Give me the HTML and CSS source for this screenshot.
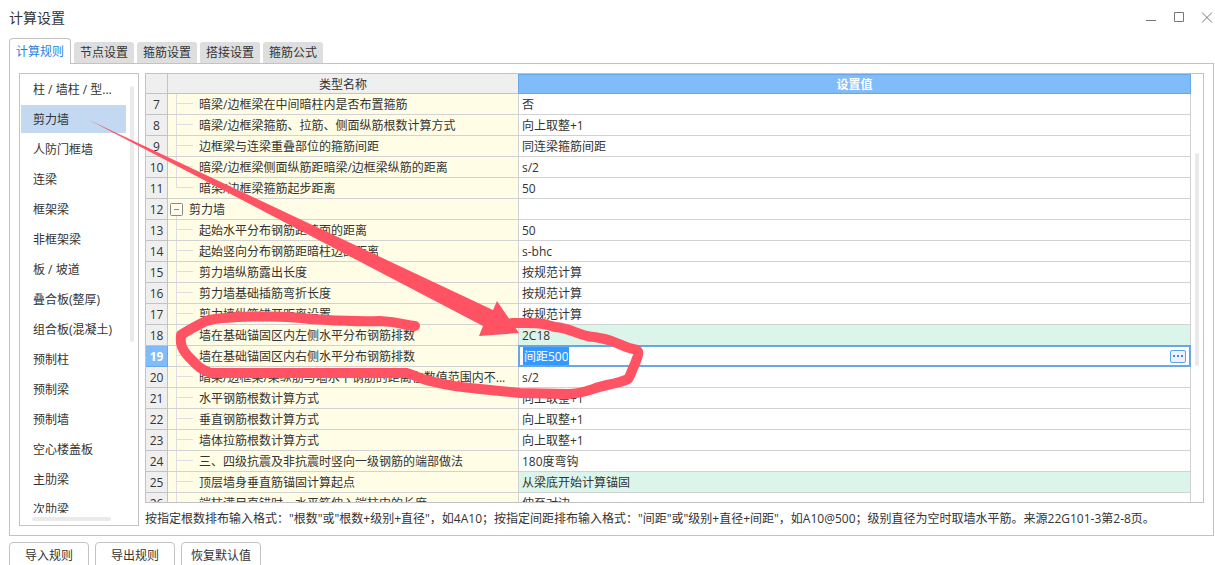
FILE: index.html
```
<!DOCTYPE html>
<html lang="zh-CN">
<head>
<meta charset="utf-8">
<title>计算设置</title>
<link rel="stylesheet" href="styles.css">
</head>
<body>
<main class="window">
  <header class="titlebar">
    <h1 class="title">计算设置</h1>
    <div class="window-controls">
      <button class="window-button" aria-label="最小化"><svg width="12" height="12" viewBox="0 0 12 12"><path d="M1 8.500h10"/></svg></button>
      <button class="window-button" aria-label="最大化"><svg width="12" height="12" viewBox="0 0 12 12"><path d="M1.500 0.500h9v9h-9z"/></svg></button>
      <button class="window-button" aria-label="关闭"><svg width="12" height="12" viewBox="0 0 12 12"><path d="M1 0.500l10 10M11 0.500l-10 10"/></svg></button>
    </div>
  </header>

  <nav class="tabs">
    <button class="tab tab-active">计算规则</button>
    <button class="tab">节点设置</button>
    <button class="tab">箍筋设置</button>
    <button class="tab">搭接设置</button>
    <button class="tab">箍筋公式</button>
  </nav>

  <section class="panel">
    <aside class="sidebar">
      <div class="sidebar-body">
        <div class="categories">
          <button class="category">柱 / 墙柱 / 型...</button>
          <button class="category category-active">剪力墙</button>
          <button class="category">人防门框墙</button>
          <button class="category">连梁</button>
          <button class="category">框架梁</button>
          <button class="category">非框架梁</button>
          <button class="category">板 / 坡道</button>
          <button class="category">叠合板(整厚)</button>
          <button class="category">组合板(混凝土)</button>
          <button class="category">预制柱</button>
          <button class="category">预制梁</button>
          <button class="category">预制墙</button>
          <button class="category">空心楼盖板</button>
          <button class="category">主肋梁</button>
          <button class="category">次肋梁</button>
        </div>
        <div class="sidebar-track"><div class="thumb sidebar-thumb"></div></div>
      </div>
      <div class="thumb bottom-thumb"></div>
    </aside>

    <div class="content">
      <div class="grid">
        <table class="rules">
          <colgroup><col class="col-number"><col class="col-name"><col></colgroup>
          <thead>
            <tr><th></th><th class="head-name">类型名称</th><th class="head-value">设置值</th></tr>
          </thead>
          <tbody>
            <tr><th>7</th><td class="name"><div class="leaf">暗梁/边框梁在中间暗柱内是否布置箍筋</div></td><td>否</td></tr>
            <tr><th>8</th><td class="name"><div class="leaf">暗梁/边框梁箍筋、拉筋、侧面纵筋根数计算方式</div></td><td>向上取整+1</td></tr>
            <tr><th>9</th><td class="name"><div class="leaf">边框梁与连梁重叠部位的箍筋间距</div></td><td>同连梁箍筋间距</td></tr>
            <tr><th>10</th><td class="name"><div class="leaf">暗梁/边框梁侧面纵筋距暗梁/边框梁纵筋的距离</div></td><td>s/2</td></tr>
            <tr><th>11</th><td class="name"><div class="leaf leaf-last">暗梁/边框梁箍筋起步距离</div></td><td>50</td></tr>
            <tr><th>12</th><td class="name"><div class="group"><button class="toggle" aria-label="折叠"><svg width="13" height="13" viewBox="0 0 13 13"><rect x="0.500" y="0.500" width="12" height="12" rx="1"/><path d="M4 6.500h5"/></svg></button><span class="group-name">剪力墙</span></div></td><td></td></tr>
            <tr><th>13</th><td class="name"><div class="leaf">起始水平分布钢筋距墙面的距离</div></td><td>50</td></tr>
            <tr><th>14</th><td class="name"><div class="leaf">起始竖向分布钢筋距暗柱边的距离</div></td><td>s-bhc</td></tr>
            <tr><th>15</th><td class="name"><div class="leaf">剪力墙纵筋露出长度</div></td><td>按规范计算</td></tr>
            <tr><th>16</th><td class="name"><div class="leaf">剪力墙基础插筋弯折长度</div></td><td>按规范计算</td></tr>
            <tr><th>17</th><td class="name"><div class="leaf">剪力墙纵筋错开距离设置</div></td><td>按规范计算</td></tr>
            <tr><th>18</th><td class="name"><div class="leaf">墙在基础锚固区内左侧水平分布钢筋排数</div></td><td class="changed">2C18</td></tr>
            <tr><th class="number-active">19</th><td class="name"><div class="leaf">墙在基础锚固区内右侧水平分布钢筋排数</div></td><td class="editing"><div class="editor"><input class="editor-input" aria-label="设置值" value="间距500" size="4"><button class="more" aria-label="更多"><svg width="16" height="13" viewBox="0 0 16 13"><rect x="0.500" y="0.500" width="15" height="12" rx="1.500"/><path d="M3 5h2v2H3zM7 5h2v2H7zM11 5h2v2h-2z"/></svg></button></div></td></tr>
            <tr><th>20</th><td class="name"><div class="leaf">暗梁/边框梁/梁纵筋与墙水平钢筋的距离在数值范围内不...</div></td><td>s/2</td></tr>
            <tr><th>21</th><td class="name"><div class="leaf">水平钢筋根数计算方式</div></td><td>向上取整+1</td></tr>
            <tr><th>22</th><td class="name"><div class="leaf">垂直钢筋根数计算方式</div></td><td>向上取整+1</td></tr>
            <tr><th>23</th><td class="name"><div class="leaf">墙体拉筋根数计算方式</div></td><td>向上取整+1</td></tr>
            <tr><th>24</th><td class="name"><div class="leaf">三、四级抗震及非抗震时竖向一级钢筋的端部做法</div></td><td>180度弯钩</td></tr>
            <tr><th>25</th><td class="name"><div class="leaf">顶层墙身垂直筋锚固计算起点</div></td><td class="changed">从梁底开始计算锚固</td></tr>
            <tr><th>26</th><td class="name"><div class="leaf">端柱满足直锚时，水平筋伸入端柱内的长度</div></td><td>伸至对边</td></tr>
          </tbody>
        </table>
        <div class="grid-track"><div class="thumb grid-thumb"></div></div>
      </div>
      <p class="hint">按指定根数排布输入格式："根数"或"根数+级别+直径"，如4A10；按指定间距排布输入格式："间距"或"级别+直径+间距"，如A10@500；级别直径为空时取墙水平筋。来源22G101-3第2-8页。</p>
    </div>
  </section>

  <footer class="actions">
    <button class="action">导入规则</button>
    <button class="action">导出规则</button>
    <button class="action">恢复默认值</button>
  </footer>

  <svg class="markup" width="660" height="420" viewBox="0 0 660 420" aria-hidden="true">
    <path class="markup-arrow" d="M89 120L493 310L497 301L519 333L479 336L483 326Z"/>
    <path class="markup-loop" d="M415 326C405 325 400 322 380 321C350 322 330 320 310 319C285 316 250 316 238 317C222 318 214 318 206 321C196 326 190 329 181 335C180 345 182 349 188 356C195 363 200 370 211 373L407 373C415 375 420 379 430 381C450 386 460 387 480 389L520 393L567 394C585 394 592 388 607 385C617 383 624 381 628 379C631 375 631 372 634 366C637 358 640 353 637 350C632 349 625 347 619 344C606 338 600 338 587 336C575 333 569 328 555 327C540 322 530 323 512 323"/>
  </svg>
</main>
</body>
</html>
```
FILE: styles.css
```
* {
  box-sizing: border-box;
}

body {
  margin: 0;
  overflow: hidden;
  background: #fff;
  color: #333;
  font: 12px/20px "Open Sans", "Noto Sans CJK SC", sans-serif;
}

button {
  margin: 0;
  padding: 0;
  border: 0;
  background: none;
  color: inherit;
  font: inherit;
  white-space: nowrap;
}

svg {
  display: block;
}

.window {
  position: relative;
  display: flex;
  flex-direction: column;
  height: calc(100vh + 5px);
  padding-left: 9px;
}

.titlebar {
  display: flex;
  flex: none;
  align-items: center;
  justify-content: space-between;
  height: 36px;
  padding-right: 2px;
}

.title {
  margin: 0;
  font-size: 14px;
  font-weight: 400;
}

.window-controls {
  display: flex;
  gap: 16px;
}

.window-button svg {
  fill: none;
  stroke: #777;
}

.tabs {
  display: flex;
  flex: none;
  align-items: flex-end;
  gap: 3px;
  height: 27px;
}

.tab {
  height: 21px;
  padding: 0 6px;
  border-radius: 3px 3px 0 0;
  background: #dedede;
}

.tab-active {
  z-index: 1;
  height: 26px;
  margin-bottom: -1px;
  border: 1px solid #c3c3c6;
  border-bottom: 0;
  border-radius: 4px 4px 0 0;
  background: #fff;
  color: #2a7fe0;
}

.panel {
  display: flex;
  flex: 1;
  gap: 6px;
  min-height: 0;
  margin-right: 1px;
  padding: 9px 9px 0;
  border: 1px solid #c3c3c6;
}

.sidebar {
  display: flex;
  flex: none;
  flex-direction: column;
  gap: 4px;
  width: 120px;
  margin-bottom: 9px;
  padding: 1px 4px 4px 1px;
  border: 1px solid #c3c3c6;
}

.sidebar-body {
  display: flex;
  flex: 1;
  gap: 4px;
  min-height: 0;
}

.categories {
  display: flex;
  flex: 1;
  flex-direction: column;
  gap: 2px;
  overflow: hidden;
}

.category {
  flex: none;
  height: 28px;
  padding: 2px 0 0 12px;
  text-align: left;
}

.category-active {
  background: #c2d9f1;
}

.sidebar-track {
  width: 4px;
  padding-top: 11px;
}

.thumb {
  border-radius: 2px;
  background: #eaeaea;
}

.sidebar-thumb {
  height: 60%;
}

.bottom-thumb {
  width: 79px;
  height: 4px;
  margin-left: 11px;
}

.content {
  display: flex;
  flex: 1;
  flex-direction: column;
  min-width: 0;
}

.grid {
  display: flex;
  flex: 1;
  min-height: 0;
  overflow: hidden;
  border: 1px solid #c3c3c6;
}

.rules {
  flex: 1;
  align-self: flex-start;
  border-spacing: 0;
  table-layout: fixed;
}

.col-number {
  width: 22px;
}

.col-name {
  width: 351px;
}

.rules th,
.rules td {
  height: 21px;
  padding: 2px 0 0 3px;
  overflow: hidden;
  border-right: 1px solid #d2d2d2;
  border-bottom: 1px solid #d2d2d2;
  line-height: 18px;
  white-space: nowrap;
}

.rules th {
  padding: 2px 0 0;
  border-color: #c3c3c6;
  background: #efefef;
  font-weight: 400;
  text-align: center;
}

.rules thead th {
  height: 20px;
  line-height: 16px;
}

.rules .head-name {
  border-right-color: #67a7e8;
}

.rules .head-value {
  border: 1px solid #67a7e8;
  border-left: 0;
  background: #80bbfa;
  color: #fff;
  font-weight: 700;
}

.rules .number-active {
  border-color: #67a7e8;
  background: #80bbfa;
  color: #fff;
  font-weight: 700;
}

.rules .name {
  padding: 0;
  background: #fffde6;
}

.leaf {
  padding: 2px 0 0 31px;
  background:
    linear-gradient(#dedee2, #dedee2) 8px 0 / 1px 100% no-repeat,
    linear-gradient(#dedee2, #dedee2) 9px 9px / 16px 1px no-repeat;
}

.leaf-last {
  background-size: 1px 10px, 16px 1px;
}

.group {
  display: flex;
  align-items: center;
  gap: 6px;
  height: 20px;
  padding-left: 2px;
  background: linear-gradient(#dedee2, #dedee2) 8px 100% / 1px 4px no-repeat;
}

.group-name {
  padding-top: 2px;
}

.toggle svg {
  fill: #fffdf0;
  stroke: #888;
}

.rules .changed {
  background: #dcf5ea;
}

.rules .editing {
  padding: 0;
  overflow: visible;
}

.editor {
  display: flex;
  position: relative;
  align-items: center;
  justify-content: space-between;
  height: 22px;
  margin: -1px;
  padding: 0 3px;
  border: 2px solid #67a7e8;
  background: #fff;
}

.editor-input {
  width: 46px;
  height: 18px;
  padding: 1px 1px 0;
  border: 0;
  background: #3399ff;
  color: #fff;
  font: inherit;
}

.more svg {
  fill: #eef0fa;
  stroke: #5aa5ea;
}

.more path {
  fill: #3d8be0;
  stroke: none;
}

.grid-track {
  flex: none;
  width: 12px;
  padding: 79px 4px 0;
}

.grid-thumb {
  height: 213px;
}

.hint {
  margin: 0;
  padding: 6px 0;
  white-space: nowrap;
}

.actions {
  display: flex;
  flex: none;
  gap: 6px;
  padding-top: 6px;
}

.action {
  width: 80px;
  height: 28px;
  border: 1px solid #c3c3c6;
  border-radius: 4px;
}

.markup {
  position: absolute;
  top: 0;
  left: 0;
  z-index: 2;
  pointer-events: none;
}

.markup-arrow {
  fill: #ff5262;
}

.markup-loop {
  fill: none;
  stroke: #ff5262;
  stroke-width: 10px;
  stroke-linecap: round;
  stroke-linejoin: round;
}
```
